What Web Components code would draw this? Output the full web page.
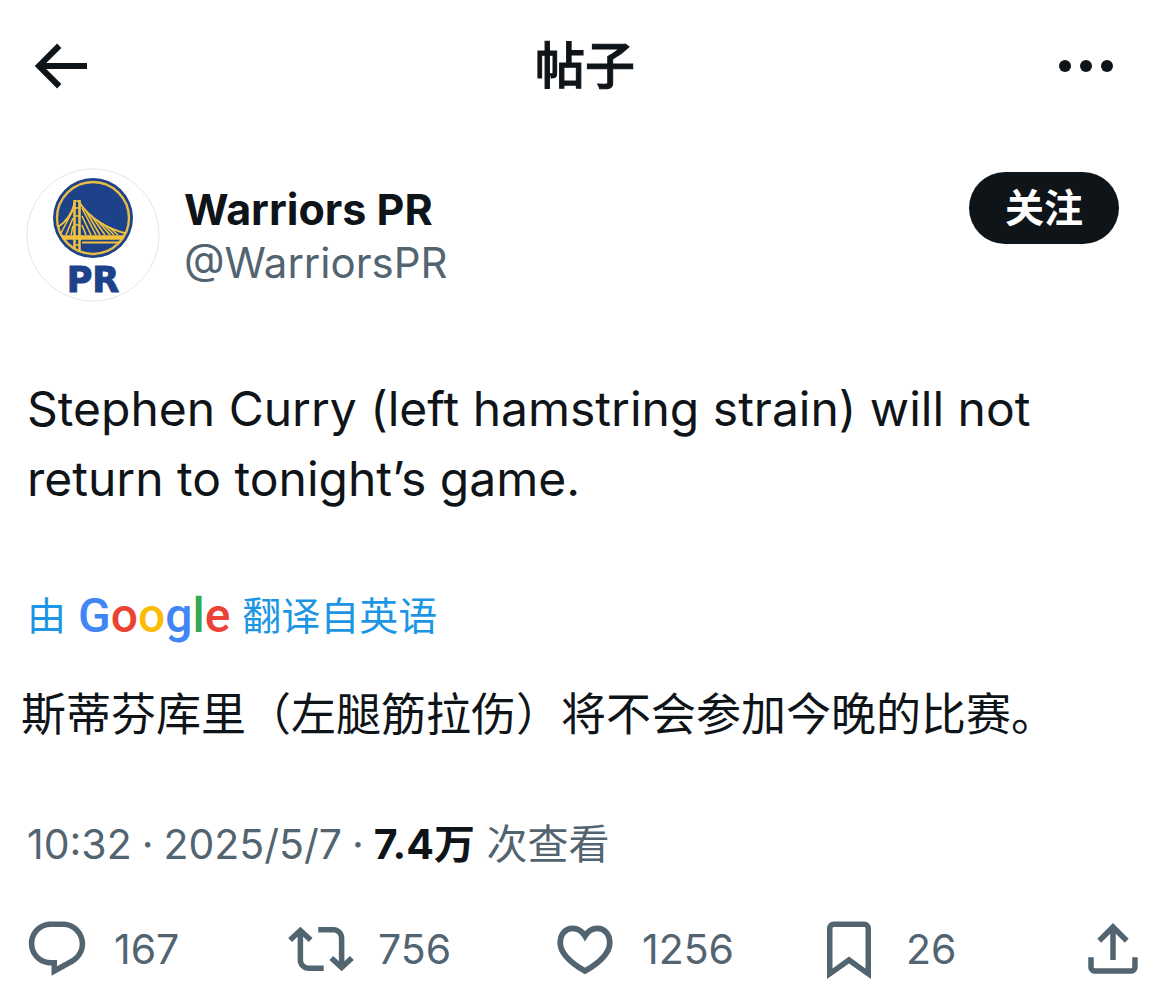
<!DOCTYPE html>
<html lang="zh-CN">
<head>
<meta charset="utf-8">
<meta name="viewport" content="width=device-width, initial-scale=1">
<title>帖子</title>
<style>
  body {
    margin: 0;
    background: #fff;
    color: #0f1419;
    font-family: Inter, "Noto Sans CJK SC", sans-serif;
  }
</style>
</head>
<body>

<post-page>
  <post-topbar slot="top">帖子</post-topbar>
  <post-author name="Warriors PR" handle="@WarriorsPR"></post-author>
  <post-text>Stephen Curry (left hamstring strain) will not return to tonight’s game.</post-text>
  <post-translation>斯蒂芬库里（左腿筋拉伤）将不会参加今晚的比赛。</post-translation>
  <post-meta time="10:32" date="2025/5/7" views="7.4万"></post-meta>
  <post-actions>
    <post-action icon="reply" label="回复">167</post-action>
    <post-action icon="repost" label="转帖">756</post-action>
    <post-action icon="like" label="喜欢">1256</post-action>
    <post-action icon="bookmark" label="书签">26</post-action>
    <post-action icon="share" label="分享"></post-action>
  </post-actions>
</post-page>

<script>
const ICONS = {
  back: '<path d="M7.414 13l5.043 5.04-1.414 1.42L3.586 12l7.457-7.46 1.414 1.42L7.414 11H21v2H7.414z"/>',
  more: '<circle cx="5" cy="12" r="2"/><circle cx="12" cy="12" r="2"/><circle cx="19" cy="12" r="2"/>',
  reply: '<path d="M1.751 10c0-4.42 3.584-8 8.005-8h4.366c4.49 0 8.129 3.64 8.129 8.13 0 2.96-1.607 5.68-4.196 7.11l-8.054 4.46v-3.69h-.067c-4.49.1-8.183-3.51-8.183-8.01zm8.005-6c-3.317 0-6.005 2.69-6.005 6 0 3.37 2.77 6.08 6.138 6.01l.351-.01h1.761v2.3l5.087-2.81c1.951-1.08 3.163-3.13 3.163-5.36 0-3.39-2.744-6.13-6.129-6.13H9.756z"/>',
  repost: '<path d="M4.5 3.88l4.432 4.14-1.364 1.46L5.5 7.55V16c0 1.1.896 2 2 2H13v2H7.5c-2.209 0-4-1.79-4-4V7.55L1.432 9.48.068 8.02 4.5 3.88zM16.5 6H11V4h5.5c2.209 0 4 1.79 4 4v8.45l2.068-1.93 1.364 1.46-4.432 4.14-4.432-4.14 1.364-1.46 2.068 1.93V8c0-1.1-.896-2-2-2z"/>',
  like: '<path fill="none" stroke="currentColor" stroke-width="2.1" d="M12 7.3C11 5.7 9.3 4.5 7.5 4.5 4.9 4.5 3 6.6 3 9.7 3 13.5 6.6 16.9 12 20c5.4-3.1 9-6.5 9-10.3 0-3.1-1.9-5.2-4.5-5.2-1.8 0-3.5 1.2-4.5 2.8z"/>',
  bookmark: '<path d="M4 4.5C4 3.12 5.119 2 6.5 2h11C18.881 2 20 3.12 20 4.5v18.44l-8-5.71-8 5.71V4.5zM6.5 4c-.276 0-.5.22-.5.5v14.56l6-4.29 6 4.29V4.5c0-.28-.224-.5-.5-.5h-11z"/>',
  share: '<path d="M12 2.59l5.7 5.7-1.41 1.42L13 6.41V16h-2V6.41l-3.3 3.3-1.41-1.42L12 2.59zM21 15l-.02 3.51c0 1.38-1.12 2.49-2.5 2.49H5.5C4.11 21 3 19.88 3 18.5V15h2v3.5c0 .28.22.5.5.5h12.98c.28 0 .5-.22.5-.5L19 15h2z"/>'
};

function icon(name) {
  return `<svg viewBox="0 0 24 24" fill="currentColor" aria-hidden="true">${ICONS[name]}</svg>`;
}

class PostPage extends HTMLElement {
  constructor() {
    super();
    this.root = this.attachShadow({ mode: 'open' });
  }

  connectedCallback() {
    this.root.innerHTML = `
      <style>
        :host { display: block; }
        article {
          display: flex;
          flex-direction: column;
          padding: 36px 24px 16px;
        }
      </style>
      <slot name="top"></slot>
      <article><slot></slot></article>
    `;
  }
}

class PostTopbar extends HTMLElement {
  constructor() {
    super();
    this.root = this.attachShadow({ mode: 'open' });
  }

  connectedCallback() {
    this.root.innerHTML = `
      <style>
        :host { display: block; }
        header {
          display: grid;
          grid-template-columns: 1fr auto 1fr;
          align-items: center;
          padding: 30px 48px 30px 24px;
        }
        h1 {
          margin: 0 0 0 24px;
          font-size: 50px;
          line-height: 72px;
          font-weight: 500;
          -webkit-text-stroke: 1px currentColor;
        }
        button {
          display: block;
          padding: 0;
          border: 0;
          background: none;
          color: inherit;
          cursor: pointer;
        }
        .more { justify-self: end; }
        svg { display: block; width: 72px; height: 72px; }
      </style>
      <header>
        <button class="back" aria-label="返回">${icon('back')}</button>
        <h1><slot></slot></h1>
        <button class="more" aria-label="更多">${icon('more')}</button>
      </header>
    `;
  }
}

class TeamAvatar extends HTMLElement {
  constructor() {
    super();
    this.root = this.attachShadow({ mode: 'open' });
  }

  connectedCallback() {
    this.root.innerHTML = `
      <style>
        :host { display: block; }
        svg { display: block; width: 134px; height: 134px; }
        text { font: 700 35px "DejaVu Sans", sans-serif; }
      </style>
      <svg viewBox="0 0 134 134">
        <defs><clipPath id="badge"><circle cx="67" cy="50" r="36"/></clipPath></defs>
        <circle cx="67" cy="67" r="66" fill="#fff" stroke="#e4e6e8"/>
        <circle cx="67" cy="50" r="40" fill="#1d428a"/>
        <circle cx="67" cy="50" r="36" fill="none" stroke="#e8bd45" stroke-width="2.4"/>
        <g clip-path="url(#badge)" fill="none" stroke="#f2c23c">
          <path stroke-width="2" d="M49 34C46 46 40 54 32 59M53 34c11 17 29 27 49 32"/>
          <path stroke-width="1.6" d="M47 42L34 67M47 50l-7 17M47 58l-2 9M56 40l14 27M60 43l14 24M65 47l14 20M71 52l13 15M77 56l11 11M84 60l8 7M56 48l9 19M56 57l4 10"/>
          <path stroke-width="4.5" d="M28 69.5h78"/>
          <path stroke-width="2" d="M36 76q10 1 12 9M106 74.5H56"/>
          <path stroke-width="2.6" d="M48.5 32v54M53.5 32v54"/>
          <path stroke-width="1.6" d="M48 33h6M48 40h6M48 48h6M48 57h6M48 77h6"/>
        </g>
        <text x="67" y="124" text-anchor="middle" fill="#1d428a" stroke="#1d428a">PR</text>
      </svg>
    `;
  }
}

class PostAuthor extends HTMLElement {
  constructor() {
    super();
    this.root = this.attachShadow({ mode: 'open' });
  }

  connectedCallback() {
    this.root.innerHTML = `
      <style>
        :host { display: block; }
        .author {
          display: flex;
          align-items: flex-start;
          gap: 24px;
          padding: 0 27px 0 2px;
        }
        .names {
          flex: 1;
          padding-top: 14px;
          line-height: 54px;
        }
        a { display: block; color: inherit; text-decoration: none; }
        .name { font-size: 43px; font-weight: 700; }
        .handle { color: #536471; font-size: 42px; }
        button {
          margin-top: 4px;
          padding: 0 36px;
          border: 0;
          border-radius: 36px;
          background: #0f1419;
          color: #fff;
          font: inherit;
          font-size: 39px;
          font-weight: 700;
          line-height: 72px;
          cursor: pointer;
        }
      </style>
      <div class="author">
        <team-avatar></team-avatar>
        <div class="names">
          <a class="name" href="#">${this.getAttribute('name')}</a>
          <a class="handle" href="#">${this.getAttribute('handle')}</a>
        </div>
        <button>关注</button>
      </div>
    `;
  }
}

class PostText extends HTMLElement {
  constructor() {
    super();
    this.root = this.attachShadow({ mode: 'open' });
  }

  connectedCallback() {
    this.root.innerHTML = `
      <style>
        :host { display: block; }
        p {
          margin: 72px 60px 0 3px;
          font-size: 48px;
          line-height: 70px;
        }
      </style>
      <p><slot></slot></p>
    `;
  }
}

class PostTranslation extends HTMLElement {
  constructor() {
    super();
    this.root = this.attachShadow({ mode: 'open' });
  }

  connectedCallback() {
    this.root.innerHTML = `
      <style>
        :host { display: block; }
        a {
          display: flex;
          align-items: center;
          gap: 12px;
          margin: 72px 0 0 3px;
          color: #1c96e4;
          font-size: 39px;
          line-height: 60px;
          text-decoration: none;
        }
        .google {
          font-family: Roboto, sans-serif;
          font-size: 48px;
          font-weight: 500;
        }
        .b { color: #4285f4; }
        .r { color: #ea4335; }
        .y { color: #fbbc05; }
        .g { color: #34a853; }
        p {
          margin: 36px 0 0 -3px;
          font-size: 45px;
          line-height: 66px;
        }
      </style>
      <a href="#">
        <span>由</span>
        <span class="google"><span class="b">G</span><span class="r">o</span><span class="y">o</span><span class="b">g</span><span class="g">l</span><span class="r">e</span></span>
        <span>翻译自英语</span>
      </a>
      <p><slot></slot></p>
    `;
  }
}

class PostMeta extends HTMLElement {
  constructor() {
    super();
    this.root = this.attachShadow({ mode: 'open' });
  }

  connectedCallback() {
    this.root.innerHTML = `
      <style>
        :host { display: block; }
        div {
          display: flex;
          flex-wrap: wrap;
          gap: 10px;
          margin: 66px 0 0 3px;
          color: #536471;
          font-size: 41px;
          line-height: 60px;
        }
        b { color: #0f1419; font-weight: 700; }
      </style>
      <div>
        <time>${this.getAttribute('time')}</time>
        <span>·</span>
        <time>${this.getAttribute('date')}</time>
        <span>·</span>
        <span><b>${this.getAttribute('views')}</b> 次查看</span>
      </div>
    `;
  }
}

class PostActions extends HTMLElement {
  constructor() {
    super();
    this.root = this.attachShadow({ mode: 'open' });
  }

  connectedCallback() {
    this.root.innerHTML = `
      <style>
        :host { display: block; }
        div {
          display: grid;
          grid-template-columns: repeat(4, 1fr) auto;
          margin-top: 42px;
        }
      </style>
      <div role="group"><slot></slot></div>
    `;
  }
}

class PostAction extends HTMLElement {
  constructor() {
    super();
    this.root = this.attachShadow({ mode: 'open' });
  }

  connectedCallback() {
    this.root.innerHTML = `
      <style>
        :host { display: block; }
        button {
          display: flex;
          align-items: center;
          gap: 24px;
          padding: 0;
          border: 0;
          background: none;
          color: #536471;
          font: inherit;
          font-size: 41px;
          cursor: pointer;
        }
        svg { display: block; width: 66px; height: 66px; }
        :host(:empty) span { display: none; }
      </style>
      <button aria-label="${this.getAttribute('label')}">
        ${icon(this.getAttribute('icon'))}
        <span><slot></slot></span>
      </button>
    `;
  }
}

customElements.define('post-page', PostPage);
customElements.define('post-topbar', PostTopbar);
customElements.define('team-avatar', TeamAvatar);
customElements.define('post-author', PostAuthor);
customElements.define('post-text', PostText);
customElements.define('post-translation', PostTranslation);
customElements.define('post-meta', PostMeta);
customElements.define('post-actions', PostActions);
customElements.define('post-action', PostAction);
</script>
</body>
</html>
